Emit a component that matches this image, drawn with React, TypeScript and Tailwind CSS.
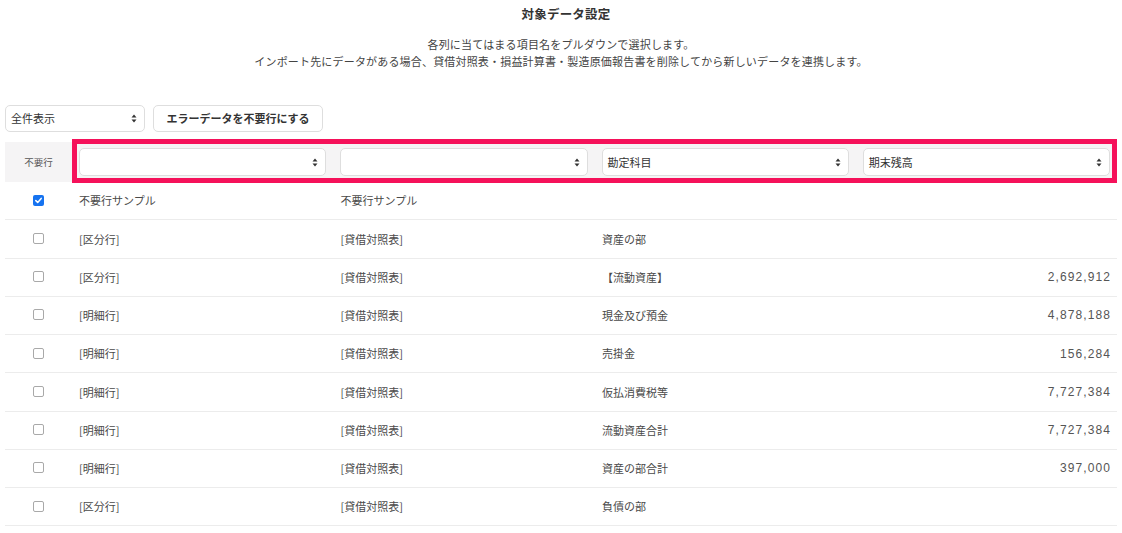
const FONT = { fontFamily: '"Noto Sans CJK JP", "Noto Sans", sans-serif' };
const NUM_FONT = { fontFamily: '"Liberation Sans", Arial, sans-serif' };

type Row = {
  checked: boolean;
  a: string;
  b: string;
  c: string;
  d: string;
};

const ROWS: Row[] = [
  { checked: true, a: "不要行サンプル", b: "不要行サンプル", c: "", d: "" },
  { checked: false, a: "[区分行]", b: "[貸借対照表]", c: "資産の部", d: "" },
  { checked: false, a: "[区分行]", b: "[貸借対照表]", c: "【流動資産】", d: "2,692,912" },
  { checked: false, a: "[明細行]", b: "[貸借対照表]", c: "現金及び預金", d: "4,878,188" },
  { checked: false, a: "[明細行]", b: "[貸借対照表]", c: "売掛金", d: "156,284" },
  { checked: false, a: "[明細行]", b: "[貸借対照表]", c: "仮払消費税等", d: "7,727,384" },
  { checked: false, a: "[明細行]", b: "[貸借対照表]", c: "流動資産合計", d: "7,727,384" },
  { checked: false, a: "[明細行]", b: "[貸借対照表]", c: "資産の部合計", d: "397,000" },
  { checked: false, a: "[区分行]", b: "[貸借対照表]", c: "負債の部", d: "" },
];

function Arrows() {
  return (
    <svg width="6" height="9" viewBox="0 0 6 9" className="shrink-0">
      <path d="M3 0.5 L5.5 3.5 L0.5 3.5 Z" fill="#333" />
      <path d="M3 8.5 L5.5 5.5 L0.5 5.5 Z" fill="#333" />
    </svg>
  );
}

function Select({ value, className = "" }: { value: string; className?: string }) {
  return (
    <div
      className={`flex h-[28px] items-center justify-between rounded-[5px] border border-[#dedede] bg-white pl-[5px] pr-[7px] text-[11px] leading-none text-[#333] ${className}`}
    >
      <span>{value}</span>
      <Arrows />
    </div>
  );
}

function Checkbox({ checked }: { checked: boolean }) {
  if (checked) {
    return (
      <div className="flex h-[11px] w-[11px] items-center justify-center rounded-[2px] bg-[#1673f0]">
        <svg width="9" height="9" viewBox="0 0 9 9">
          <path d="M1.8 4.6 L3.7 6.4 L7.2 2.4" fill="none" stroke="#fff" strokeWidth="1.5" strokeLinecap="round" strokeLinejoin="round" />
        </svg>
      </div>
    );
  }
  return <div className="h-[11px] w-[11px] rounded-[2px] border border-[#a9a9a9] bg-white" />;
}

export default function App() {
  return (
    <div className="min-h-[533px] w-full bg-white px-[5px]" style={FONT}>
      <div className="pt-[5px] text-center">
        <h1 className="pl-[10px] text-[12.5px] font-bold leading-[18px] tracking-[0.2px] text-[#333]">対象データ設定</h1>
        <div className="mt-[12.5px] text-[11px] leading-[17px] tracking-[0.18px] text-[#444]">
          <p>各列に当てはまる項目名をプルダウンで選択します。</p>
          <p>インポート先にデータがある場合、貸借対照表・損益計算書・製造原価報告書を削除してから新しいデータを連携します。</p>
        </div>
      </div>

      <div className="mt-[35.5px] flex gap-[8px]">
        <Select value="全件表示" className="w-[140px] !h-[27px]" />
        <button className="h-[27px] w-[170px] rounded-[5px] border border-[#dedede] bg-white text-[11px] font-bold leading-none text-[#333]">
          エラーデータを不要行にする
        </button>
      </div>

      <div className="mt-[10px]">
        <div className="flex h-[40px] bg-[#f5f4f5]">
          <div className="flex w-[67px] shrink-0 items-center justify-center text-[9.5px] text-[#555]">不要行</div>
          <div className="relative flex flex-1">
            {["", "", "勘定科目", "期末残高"].map((v, i) => (
              <div key={i} className="flex flex-1 items-center px-[7px]">
                <Select value={v} className="w-full" />
              </div>
            ))}
            <div className="pointer-events-none absolute -top-[3px] -bottom-[1px] left-0 right-0 border-[5px] border-[#f5115a]" />
          </div>
        </div>

        {ROWS.map((r, i) => (
          <div key={i} className="flex h-[38.25px] border-b border-[#ececec] text-[11px] text-[#4a4a4a]">
            <div className="flex w-[67px] shrink-0 items-center justify-center pb-[1px]">
              <Checkbox checked={r.checked} />
            </div>
            <div className="flex flex-1 items-center px-[7px]">{r.a}</div>
            <div className="flex flex-1 items-center px-[7px]">{r.b}</div>
            <div className="flex flex-1 items-center px-[7px]">{r.c}</div>
            <div
              className="flex flex-1 items-center justify-end pl-[7px] pr-[6px] text-[12px] tracking-[1.1px] text-[#555]"
              style={NUM_FONT}
            >
              {r.d}
            </div>
          </div>
        ))}
      </div>
    </div>
  );
}
